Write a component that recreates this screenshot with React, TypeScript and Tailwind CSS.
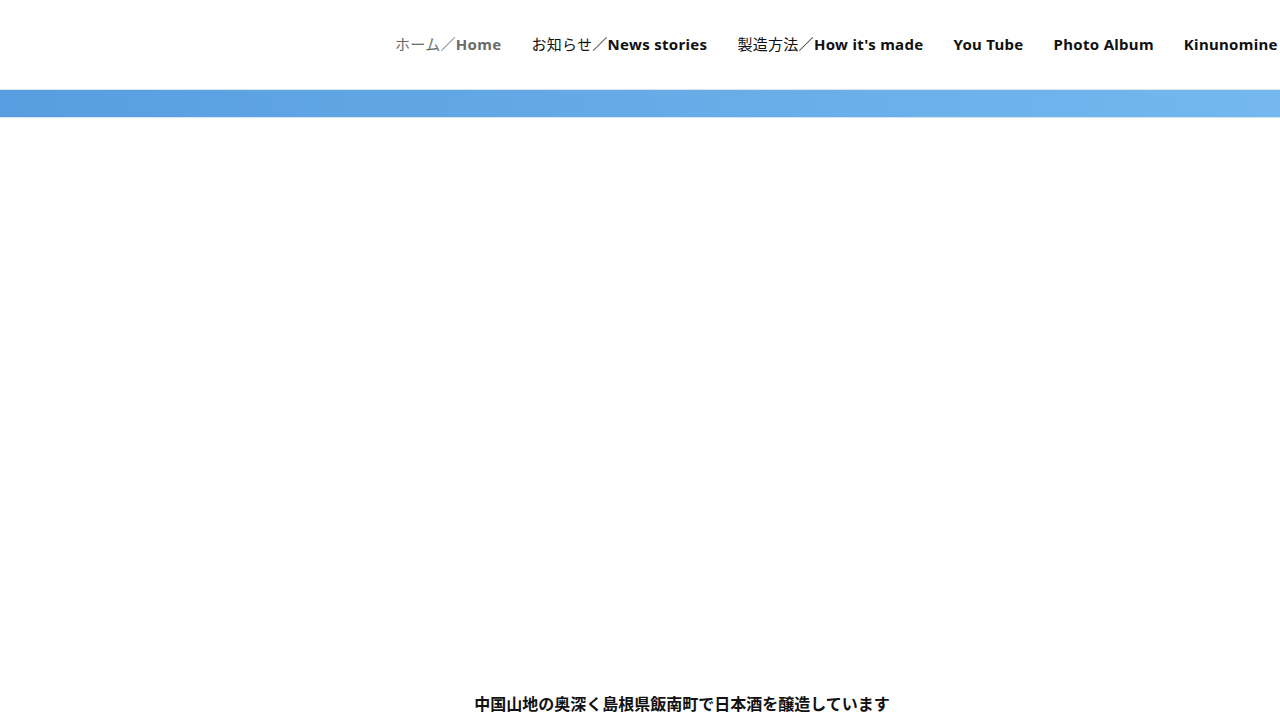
const navItems = [
  { jp: "ホーム／", en: "Home", active: true },
  { jp: "お知らせ／", en: "News stories" },
  { jp: "製造方法／", en: "How it's made" },
  { jp: "", en: "You Tube" },
  { jp: "", en: "Photo Album" },
  { jp: "", en: "Kinunomine 紹介" },
];

export default function App() {
  return (
    <div className="min-h-screen w-full overflow-hidden bg-white font-['Noto_Sans','Noto_Sans_CJK_JP',sans-serif]">
      {/* Header nav */}
      <header className="h-[89px] flex items-center pl-[395px] whitespace-nowrap">
        <nav className="flex items-center gap-[30px] text-[15px] tracking-[0.02em]">
          {navItems.map((item) => (
            <a
              key={item.en}
              href="#"
              className={item.active ? "text-[#6b6b6b]" : "text-[#111]"}
            >
              {item.jp && <span className="font-normal">{item.jp}</span>}
              <span className="font-bold">{item.en}</span>
            </a>
          ))}
        </nav>
      </header>

      {/* Blue strip */}
      <div className="border-t border-[#dfe6ea]" />
      <div className="h-[27px] bg-gradient-to-r from-[#589ddf] to-[#74b8ef]" />
      <div className="border-t border-[#cfe6f6]" />

      {/* Hero area */}
      <main className="h-[574px]" />

      <p className="text-center pl-[84px] text-[16px] font-bold text-[#111]">
        中国山地の奥深く島根県飯南町で日本酒を醸造しています
      </p>
    </div>
  );
}
